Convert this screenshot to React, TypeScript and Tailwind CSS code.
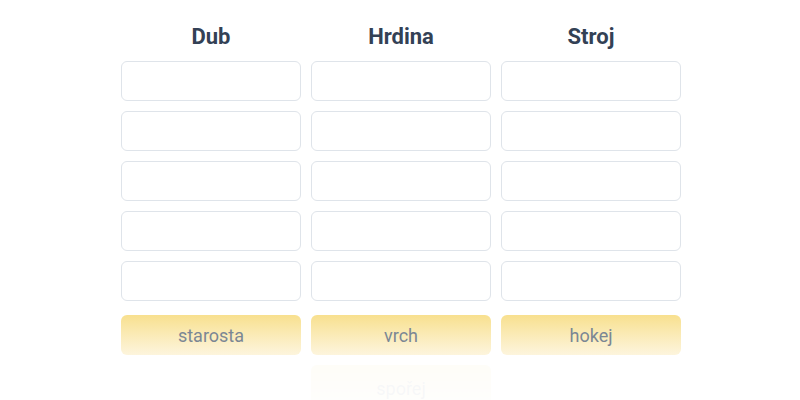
import React from 'react';

const columns = ['Dub', 'Hrdina', 'Stroj'];
const chips = ['starosta', 'vrch', 'hokej'];
const rows = [0, 1, 2, 3, 4];

const App: React.FC = () => {
  return (
    <div
      className="w-[800px] h-[400px] bg-white overflow-hidden flex flex-col items-center pt-[22px]"
      style={{ fontFamily: 'Roboto, "Liberation Sans", sans-serif' }}
    >
      <div className="grid grid-cols-3 gap-x-[10px] w-[560px] ml-[2px]">
        {columns.map((c) => (
          <div key={c} className="flex flex-col">
            <div className="h-[29px] flex items-center justify-center text-[22px] font-bold text-[#334155] leading-none">
              {c}
            </div>
            <div className="flex flex-col gap-[10px] mt-[10px]">
              {rows.map((r) => (
                <div key={r} className="h-[40px] rounded-[6px] border border-[#dfe4ea] bg-white" />
              ))}
            </div>
          </div>
        ))}
      </div>

      {/* chip tray, second row fades out */}
      <div className="grid grid-cols-3 gap-x-[10px] gap-y-[10px] w-[560px] ml-[2px] mt-[14px]">
        {chips.map((t) => (
          <div
            key={t}
            className="h-[40px] rounded-[6px] bg-gradient-to-b from-[#f8e08e] to-[#fdf5dd] flex items-center justify-center text-[18px] text-[#7b8794]"
          >
            {t}
          </div>
        ))}
        <div />
        <div className="h-[40px] rounded-[6px] bg-gradient-to-b from-[#f8e08e] to-[#fdf5dd] flex items-center justify-center text-[18px] text-[#7b8794] opacity-[0.06] pt-[6px]">
          spořej
        </div>
      </div>
    </div>
  );
};

export default App;
